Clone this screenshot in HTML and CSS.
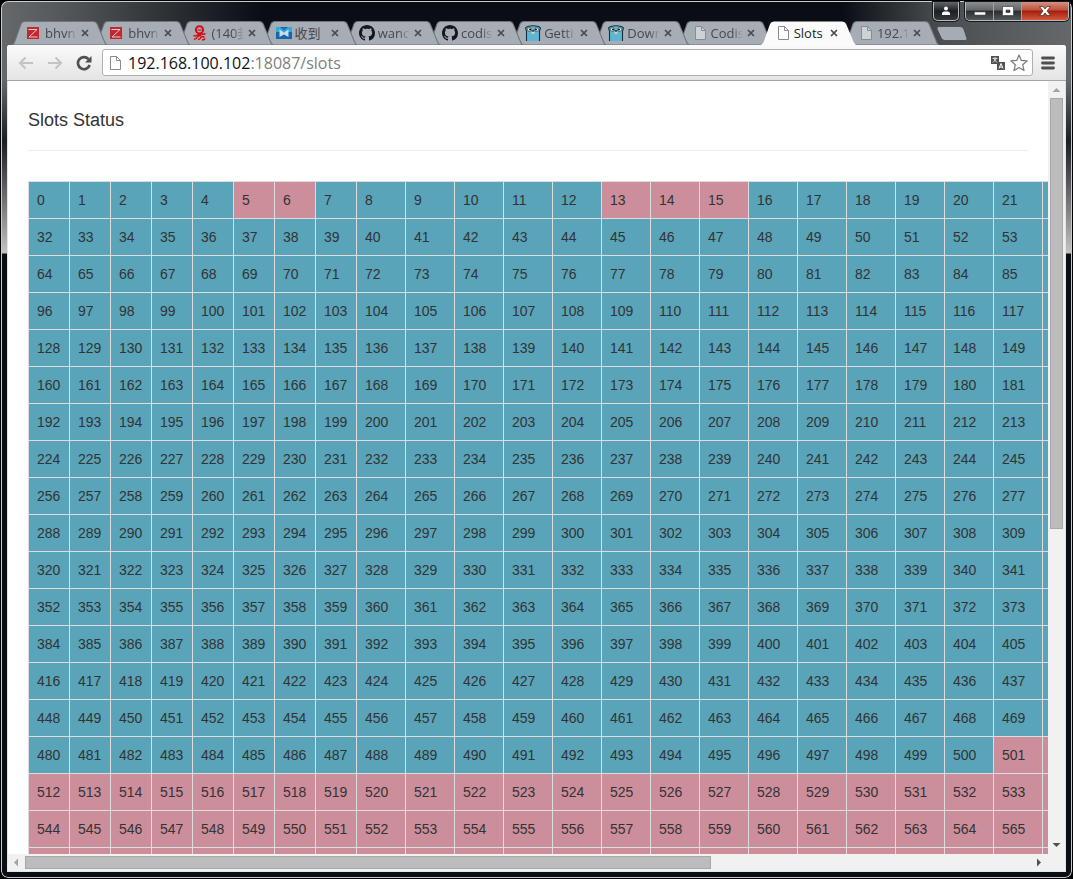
FILE: index.html
```html
<!DOCTYPE html>
<html lang="en">
<head>
<meta charset="utf-8">
<title>Slots</title>
<link rel="stylesheet" href="styles.css">
</head>
<body>
<svg class="defs" aria-hidden="true">
  <symbol id="tab-shape" viewBox="0 0 95 24" preserveAspectRatio="none"><path d="M0 24 Q2 23 3 20 L9 3 Q10 .5 13 .5 H81 Q84 .5 85 3 L92 20 Q93 23 95 24Z"/></symbol>
  <symbol id="close" viewBox="0 0 8 8"><path d="M1 1L7 7M7 1L1 7" fill="none" stroke="#484a4d" stroke-width="1.700"/></symbol>
  <symbol id="page" viewBox="0 0 16 16"><path d="M3.500 1.500h6l4 4v9h-10z" fill="#fff" fill-opacity=".45" stroke="#8b8b8b"/><path d="M9.500 1.500v4h4" fill="none" stroke="#8b8b8b"/></symbol>
  <symbol id="zed" viewBox="0 0 16 16"><path d="M1 2h12v12H1z" fill="#c1282f"/><path d="M2.500 4.500H11L3 12h8.500" fill="none" stroke="#f3dcdc" stroke-width=".9"/></symbol>
  <symbol id="knot" viewBox="0 0 16 16"><g fill="none" stroke="#d30b12"><circle cx="7.500" cy="4.800" r="3.600" stroke-width="2"/><path d="M5.500 5h4" stroke-width="1.200"/><path d="M1.500 10.500q2 1 4-.5t4-1 4-.5M2 14q2 .5 3-1.500t4-2M6 14.500q2 0 3-2t3.500 0M10 15q2.500 0 3-1.500" stroke-width="1.500"/></g></symbol>
  <symbol id="mail" viewBox="0 0 16 16"><path d="M0 2h16v12H0z" fill="#1467a8"/><path d="M0 2h4l4 3 4-3h4v5H0z" fill="#37a8dc"/><path d="M3.500 4.500L8 7.500l4.500-3v7.500L8 9.500 3.500 12z" fill="#c6dfed"/><path d="M5 3h6L8 6z" fill="#1b7dbd"/></symbol>
  <symbol id="github" viewBox="0 0 16 16"><path fill="#15171a" d="M8 0C3.580 0 0 3.580 0 8c0 3.540 2.290 6.530 5.470 7.590.4.070.55-.17.55-.38 0-.19-.01-.82-.01-1.490-2.010.37-2.530-.49-2.690-.94-.09-.23-.48-.94-.82-1.130-.28-.15-.68-.52-.01-.53.63-.01 1.080.58 1.230.82.72 1.210 1.870.87 2.330.66.070-.52.28-.87.51-1.070-1.780-.2-3.640-.89-3.640-3.950 0-.87.31-1.590.82-2.150-.08-.2-.36-1.020.08-2.120 0 0 .67-.21 2.200.82.64-.18 1.320-.27 2-.27s1.360.09 2 .27c1.530-1.040 2.200-.82 2.200-.82.44 1.100.16 1.920.08 2.120.51.56.82 1.270.82 2.150 0 3.070-1.870 3.750-3.650 3.950.29.25.54.73.54 1.480 0 1.070-.01 1.930-.01 2.200 0 .21.15.46.55.38A8.010 8.010 0 0 0 16 8c0-4.420-3.580-8-8-8z"/></symbol>
  <symbol id="gopher" viewBox="0 0 16 16"><path d="M1.500 16V6L.5 3l2-1.500q5.500-1.500 11 0l2 1.500-1 3v10" fill="#5fb5d2" stroke="#17313c" stroke-width="1.100"/><circle cx="4.500" cy="4.500" r="2" fill="#fff" stroke="#17313c" stroke-width=".6"/><circle cx="11.500" cy="4.500" r="2" fill="#fff" stroke="#17313c" stroke-width=".6"/><circle cx="5" cy="4.500" r="1"/><circle cx="11" cy="4.500" r="1"/><ellipse cx="8" cy="6" rx="1.300" ry=".8"/><path d="M6.500 6.700h3v2h-3z" fill="#e8d3b8"/></symbol>
</svg>

<div class="window">
  <header class="titlebar">
    <nav class="tabs" aria-label="Tabs">
      <div class="tab"><svg class="shape"><use href="#tab-shape"/></svg><svg class="favicon"><use href="#zed"/></svg><span class="title">bhvn</span><button class="close" aria-label="Close tab"><svg><use href="#close"/></svg></button></div>
      <div class="tab"><svg class="shape"><use href="#tab-shape"/></svg><svg class="favicon"><use href="#zed"/></svg><span class="title">bhvn</span><button class="close" aria-label="Close tab"><svg><use href="#close"/></svg></button></div>
      <div class="tab"><svg class="shape"><use href="#tab-shape"/></svg><svg class="favicon"><use href="#knot"/></svg><span class="title">(140封</span><button class="close" aria-label="Close tab"><svg><use href="#close"/></svg></button></div>
      <div class="tab"><svg class="shape"><use href="#tab-shape"/></svg><svg class="favicon"><use href="#mail"/></svg><span class="title whole">收到</span><button class="close" aria-label="Close tab"><svg><use href="#close"/></svg></button></div>
      <div class="tab"><svg class="shape"><use href="#tab-shape"/></svg><svg class="favicon"><use href="#github"/></svg><span class="title">wanc</span><button class="close" aria-label="Close tab"><svg><use href="#close"/></svg></button></div>
      <div class="tab"><svg class="shape"><use href="#tab-shape"/></svg><svg class="favicon"><use href="#github"/></svg><span class="title">codis</span><button class="close" aria-label="Close tab"><svg><use href="#close"/></svg></button></div>
      <div class="tab"><svg class="shape"><use href="#tab-shape"/></svg><svg class="favicon"><use href="#gopher"/></svg><span class="title">Getti</span><button class="close" aria-label="Close tab"><svg><use href="#close"/></svg></button></div>
      <div class="tab"><svg class="shape"><use href="#tab-shape"/></svg><svg class="favicon"><use href="#gopher"/></svg><span class="title">Down</span><button class="close" aria-label="Close tab"><svg><use href="#close"/></svg></button></div>
      <div class="tab"><svg class="shape"><use href="#tab-shape"/></svg><svg class="favicon"><use href="#page"/></svg><span class="title">Codis</span><button class="close" aria-label="Close tab"><svg><use href="#close"/></svg></button></div>
      <div class="tab active"><svg class="shape"><use href="#tab-shape"/></svg><svg class="favicon"><use href="#page"/></svg><span class="title whole">Slots</span><button class="close" aria-label="Close tab"><svg><use href="#close"/></svg></button></div>
      <div class="tab"><svg class="shape"><use href="#tab-shape"/></svg><svg class="favicon"><use href="#page"/></svg><span class="title">192.1</span><button class="close" aria-label="Close tab"><svg><use href="#close"/></svg></button></div>
    </nav>
    <button class="new-tab" aria-label="New tab"><svg viewBox="0 0 32 16"><path d="M3 .5h21q3 0 4 3l3 9q.5 2-2 2H9q-3 0-4-3L1 3q-.5-2.500 2-2.500z" fill="#a5acb4" stroke="#3a3f46" stroke-width=".7"/></svg></button>
  </header>

  <div class="controls">
    <button class="user" aria-label="User"><svg viewBox="0 0 12 12"><circle cx="6" cy="3.500" r="2" fill="#fff"/><path d="M2 10V8.500q0-1.500 2-2h4q2 .5 2 2V10z" fill="#fff"/></svg></button>
    <div class="group">
      <button class="min" aria-label="Minimize"><svg viewBox="0 0 12 12"><path d="M.5 7h11v3H.5z" fill="#fff" stroke="#555" stroke-width=".6"/></svg></button>
      <button class="max" aria-label="Maximize"><svg viewBox="0 0 12 12"><path d="M.5 1.500h11v9H.5zM4 5v2.500h4V5z" fill="#fff" fill-rule="evenodd" stroke="#444" stroke-width=".7"/></svg></button>
      <button class="quit" aria-label="Close"><svg viewBox="0 0 12 12"><path d="M.5 1.500h3.500L6 4l2-2.500h3.500L8 6l3.500 4.500H8L6 8l-2 2.500H.5L4 6z" fill="#fff" stroke="#55211b" stroke-width=".7"/></svg></button>
    </div>
  </div>

  <div class="client">
    <div class="toolbar">
      <button class="tool" aria-label="Back"><svg viewBox="0 0 16 16"><path d="M7.500 2.500L2 8l5.500 5.500M2 8h13" fill="none" stroke="#c3c3c3" stroke-width="2"/></svg></button>
      <button class="tool" aria-label="Forward"><svg viewBox="0 0 16 16"><path d="M8.500 2.500L14 8l-5.500 5.500M14 8H1" fill="none" stroke="#c3c3c3" stroke-width="2"/></svg></button>
      <button class="tool" aria-label="Reload"><svg viewBox="0 0 16 16"><path d="M12.500 4.200A6 6 0 1 0 13.700 10" fill="none" stroke="#4f4f4f" stroke-width="2.600"/><path d="M15.500 1v6.500H9z" fill="#4f4f4f"/></svg></button>
      <div class="omnibox">
        <svg class="page-icon"><use href="#page"/></svg>
        <div class="url" role="textbox" aria-label="Address">192.168.100.102<span>:18087/slots</span></div>
        <button aria-label="Translate"><svg viewBox="0 0 16 16"><path d="M1 1h8v8H1zM7 7h8v8H7z" fill="#515151"/><path d="M2.500 3.300h5M5 2v1.300M3.500 3.500l3.500 4M6.500 3.500L3 7.500" stroke="#fff" stroke-width=".8" fill="none"/><path d="M9 13.500l2-5 2 5M9.800 12h2.600" stroke="#fff" fill="none"/></svg></button>
        <button aria-label="Bookmark"><svg class="star" viewBox="0 0 18 18"><path d="M9 1l2.300 5.400 5.800.5-4.400 3.900L14 16.600 9 13.600 4 16.600l1.300-5.800L.9 6.900l5.800-.5z" fill="#fff" stroke="#777" stroke-width="1.200" stroke-linejoin="round"/></svg></button>
      </div>
      <button class="menu" aria-label="Menu"><svg viewBox="0 0 14 14"><path d="M1.500 2h11M1.500 7h11M1.500 12h11" stroke="#4f4f4f" stroke-width="2.800" stroke-linecap="round"/></svg></button>
    </div>

    <div class="view">
      <main class="page">
        <h1>Slots Status</h1>
        <hr>
        <table class="slots">
          <colgroup><col class="narrow" span="8"><col class="wide" span="24"></colgroup>
          <tbody id="slots"></tbody>
        </table>
      </main>
      <div class="scroll vertical">
        <svg viewBox="0 0 17 17"><path d="M4.500 11L8.500 7l4 4z" fill="#a3a3a3"/></svg>
        <div class="track"><div class="thumb"></div></div>
        <svg viewBox="0 0 17 17"><path d="M4.500 6l4 4 4-4z" fill="#505050"/></svg>
      </div>
      <div class="scroll horizontal">
        <svg viewBox="0 0 17 17"><path d="M10 4.500l-4 4 4 4z" fill="#a3a3a3"/></svg>
        <div class="track"><div class="thumb"></div></div>
        <svg viewBox="0 0 17 17"><path d="M6 4.500l4 4-4 4z" fill="#505050"/></svg>
      </div>
      <div class="corner"></div>
    </div>
  </div>
</div>
<script src="slots.js"></script>
</body>
</html>
```
FILE: styles.css
```css
* { box-sizing: border-box; }
body {
  margin: 0;
  height: 100vh;
  background: #000;
  font-family: "Liberation Sans", Arial, sans-serif;
}
button { padding: 0; border: 0; background: none; display: flex; align-items: center; justify-content: center; }
svg { display: block; flex: none; }
.defs { position: absolute; width: 0; height: 0; }

.window {
  position: relative;
  height: 100vh;
  display: flex;
  flex-direction: column;
  padding: 0 6px 6px;
  border: 1px solid #000;
  border-radius: 8px;
  box-shadow: inset 0 0 0 1px #c8ccd0;
  background:
    linear-gradient(transparent 140px, #c4c4c4 252px, transparent 253px),
    linear-gradient(transparent 80px, #1b1e22 140px, #0a0d14 254px),
    linear-gradient(90deg, #66696b 0, #55585b 60px, #0a0d14 260px, #0a0d14 calc(100% - 230px), #4b4e51 calc(100% - 130px), #66696b 100%);
}

.titlebar { display: flex; align-items: flex-end; padding: 20px 130px 0 5px; }
.tabs { display: flex; flex: 1; min-width: 0; }
.tab {
  position: relative;
  display: flex;
  align-items: center;
  flex: 1 1 0;
  min-width: 0;
  height: 24px;
  padding: 0 14px;
  margin-right: -12px;
  color: #45484c;
  font: 13px/20px "Open Sans", "Noto Sans CJK SC", sans-serif;
}
.tab:nth-child(1) { z-index: 11; }
.tab:nth-child(2) { z-index: 10; }
.tab:nth-child(3) { z-index: 9; }
.tab:nth-child(4) { z-index: 8; }
.tab:nth-child(5) { z-index: 7; }
.tab:nth-child(6) { z-index: 6; }
.tab:nth-child(7) { z-index: 5; }
.tab:nth-child(8) { z-index: 4; }
.tab:nth-child(9) { z-index: 3; }
.tab:nth-child(11) { z-index: 1; margin-right: 0; }
.tab.active { z-index: 12; color: #222; }
.shape { position: absolute; inset: 0; width: 100%; height: 100%; fill: #a7adb5; stroke: #70757c; stroke-width: 1px; }
.active .shape { fill: #fbfbfb; stroke: none; }
.favicon { position: relative; width: 16px; height: 16px; }
.title {
  position: relative;
  flex: 1;
  min-width: 0;
  margin: 0 4px 0 3px;
  overflow: hidden;
  white-space: nowrap;
  -webkit-mask-image: linear-gradient(90deg, #000 65%, transparent);
  mask-image: linear-gradient(90deg, #000 65%, transparent);
}
.title.whole { -webkit-mask-image: none; mask-image: none; overflow: visible; }
.close { position: relative; width: 8px; height: 8px; margin-right: 4px; }
.close svg { width: 8px; height: 8px; }
.new-tab { width: 32px; height: 16px; margin: 0 -32px 3px -3px; }
.new-tab svg { width: 32px; height: 16px; }

.controls { position: absolute; z-index: 20; top: 1px; right: 3px; display: flex; gap: 6px; }
.controls button { height: 18px; }
.controls svg { width: 12px; height: 12px; }
.user, .group {
  border: 1px solid #b5b9bc;
  border-top: 0;
  border-radius: 0 0 5px 5px;
  box-shadow: 0 0 0 1px #15181c;
}
.controls .user { width: 26px; height: 19px; border: 1px solid #b5b9bc; border-top: 0; background: linear-gradient(#62666a, #1d2023 50%, #34383c); }
.group { display: flex; overflow: hidden; }
.min, .max { width: 28px; border-right: 1px solid #a0a4a8; background: linear-gradient(#8b8e91, #63676a 45%, #2a2d30 50%, #54585b); }
.quit { width: 46px; background: linear-gradient(#d39284, #c1503a 45%, #a51d0c 50%, #cf5a3c); }

.client { flex: 1; min-height: 0; display: flex; flex-direction: column; background: #fff; border-radius: 3px 3px 0 0; }
.toolbar {
  display: flex;
  align-items: center;
  height: 36px;
  padding: 0 11px 0 11px;
  border-bottom: 1px solid #a6a6a6;
  border-radius: 3px 3px 0 0;
  background: linear-gradient(#fafafa, #e4e4e4);
}
.tool { width: 16px; height: 16px; margin-right: 13px; }
.tool svg { width: 16px; height: 16px; }
.omnibox {
  flex: 1;
  min-width: 0;
  display: flex;
  align-items: center;
  gap: 4px;
  height: 27px;
  margin: 0 8px 0 -3px;
  padding: 0 4px;
  background: #fff;
  border: 1px solid #b0b0b0;
  border-radius: 3px;
}
.omnibox svg { width: 16px; height: 16px; }
.omnibox .star { width: 18px; height: 18px; }
.url { flex: 1; margin-left: 1px; color: #111; font: 16px/24px "Open Sans", sans-serif; white-space: nowrap; overflow: hidden; }
.url span { color: #808080; }
.menu, .menu svg { width: 14px; height: 14px; }

.view { flex: 1; min-height: 0; display: grid; grid-template: minmax(0, 1fr) 17px / minmax(0, 1fr) 17px; border: 0 solid #dfe6e6; border-width: 0 1px 1px; }
.page { grid-area: 1 / 1; overflow: hidden; padding: 0 20px; color: #333; }
h1 { margin: 0; padding-top: 29px; font-size: 18px; font-weight: 400; line-height: 20px; }
hr { margin: 20px 0 30px; border: 0; border-top: 1px solid #eee; }
.slots { table-layout: fixed; width: 1505px; border-collapse: collapse; font-size: 14px; line-height: 20px; }
.narrow { width: 41px; }
.wide { width: 49px; }
.slots td { padding: 8px; border: 1px solid #ddd; background: #59a4b9; }
.slots td.migrated { background: #cd8e9c; }

.scroll { display: flex; background: #f1f1f1; }
.scroll svg { width: 17px; height: 17px; }
.track { flex: 1; display: flex; }
.thumb { background: #bcbcbc; border: 1px solid #a8a8a8; }
.vertical { grid-area: 1 / 2; flex-direction: column; }
.vertical .track { padding: 0 2px; }
.vertical .thumb { width: 100%; height: 58.3%; }
.horizontal { grid-area: 2 / 1; }
.horizontal .track { padding: 2px 0; }
.horizontal .thumb { width: 68.2%; height: 100%; }
.corner { background: #f1f1f1; }
```
FILE: slots.js
```js
const COLUMNS = 32;
const TOTAL = 1024;
const FIRST_RUN = 501;
const single = new Set([5, 6, 13, 14, 15]);
const body = document.getElementById("slots");

for (let start = 0; start < TOTAL; start += COLUMNS) {
  const row = body.insertRow();
  for (let slot = start; slot < start + COLUMNS; slot++) {
    const cell = row.insertCell();
    cell.textContent = slot;
    if (slot >= FIRST_RUN || single.has(slot)) cell.className = "migrated";
  }
}
```
